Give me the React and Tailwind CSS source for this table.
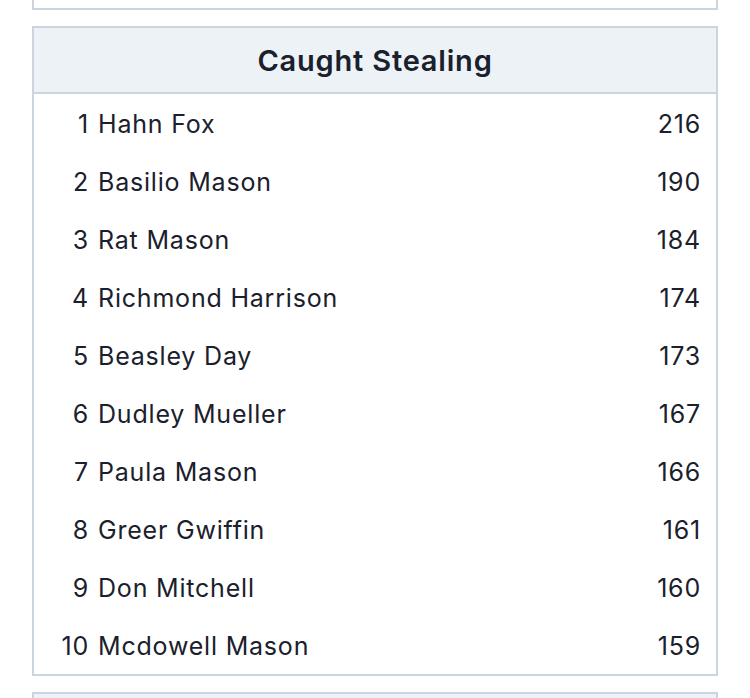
import React from "react";

const leaders = [
  { name: "Hahn Fox", value: 216 },
  { name: "Basilio Mason", value: 190 },
  { name: "Rat Mason", value: 184 },
  { name: "Richmond Harrison", value: 174 },
  { name: "Beasley Day", value: 173 },
  { name: "Dudley Mueller", value: 167 },
  { name: "Paula Mason", value: 166 },
  { name: "Greer Gwiffin", value: 161 },
  { name: "Don Mitchell", value: 160 },
  { name: "Mcdowell Mason", value: 159 },
];

export default function App() {
  return (
    <div
      className="min-h-screen bg-white px-[32px] text-[#1a202c] overflow-hidden"
      style={{ fontFamily: "Inter, 'Liberation Sans', sans-serif" }}
    >
      {/* previous card, cut off at the top */}
      <div className="h-[10px] border-2 border-t-0 border-[#cbd5e0] mb-[16px]" />

      <div className="border-2 border-[#cbd5e0] mb-[16px]">
        <div className="h-[66px] pt-[2px] bg-[#edf2f7] border-b-2 border-[#cbd5e0] flex items-center justify-center">
          <h2 className="text-[29px] font-semibold tracking-[0.8px]">Caught Stealing</h2>
        </div>

        <ul>
          {leaders.map((p, i) => (
            <li key={p.name} className="h-[58px] pt-[4px] flex items-center pr-[15px] text-[25px] tracking-[0.8px]">
              <span className="w-[55px] text-right">{i + 1}</span>
              <span className="ml-[9px] flex-1">{p.name}</span>
              <span>{p.value}</span>
            </li>
          ))}
        </ul>
      </div>

      {/* next card, cut off at the bottom */}
      <div className="h-[40px] border-2 border-b-0 border-[#cbd5e0] bg-[#edf2f7]" />
    </div>
  );
}
